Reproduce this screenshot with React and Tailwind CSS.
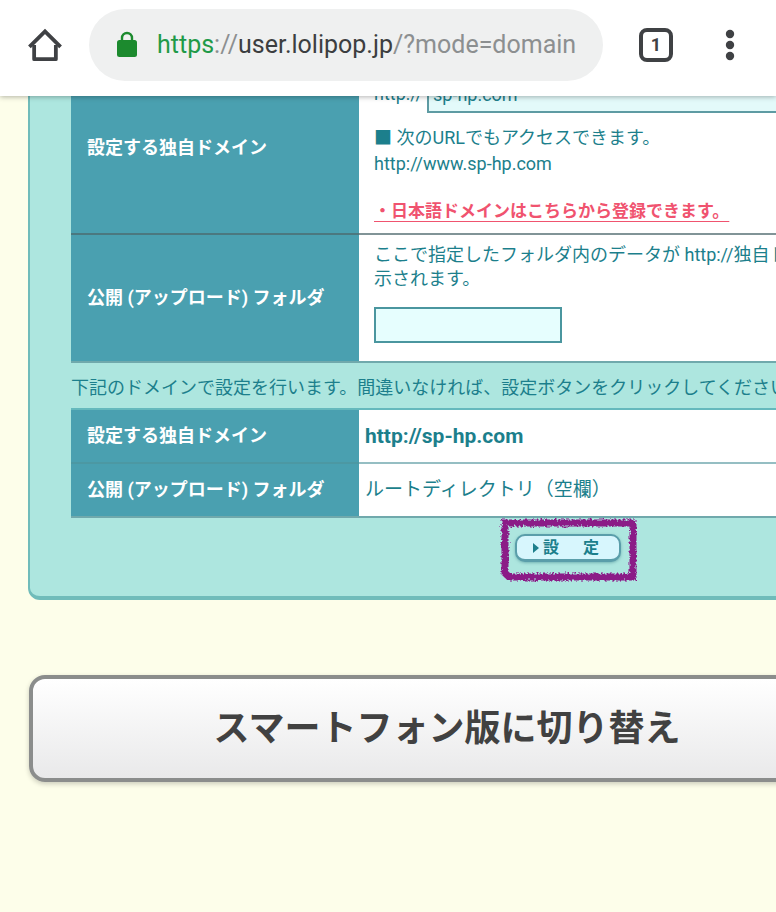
import { useState } from "react";

const labelCell = "w-72 bg-[#4aa0b0] pl-4 text-left align-middle font-bold text-white";

function HomeIcon() {
  return (
    <svg className="h-[34px] w-[34px]" viewBox="0 0 36 36" fill="none" stroke="#3f4144" strokeWidth="4" strokeLinejoin="round">
      <path d="M6.5 18v15h23V18" />
      <path d="M1.5 20 18 3.5 34.5 20" strokeLinejoin="miter" />
    </svg>
  );
}

function LockIcon() {
  return (
    <svg className="h-7 w-5 shrink-0" viewBox="0 0 20 28">
      <path d="M5 11V7a5 5 0 0 1 10 0v4" fill="none" stroke="#1c8a2e" strokeWidth="2.4" />
      <rect x="0" y="9" width="20" height="17" rx="2.5" fill="#1c8a2e" />
    </svg>
  );
}

function BrowserBar() {
  return (
    <header className="relative z-10 flex h-24 items-center bg-white pb-1.5 pl-7 pr-9 shadow-[0_1px_5px_rgba(0,0,0,0.3)]">
      <button type="button" aria-label="Home" className="mr-[27px] shrink-0">
        <HomeIcon />
      </button>
      <button type="button" className="flex h-[72px] min-w-0 flex-1 items-center gap-5 overflow-hidden rounded-full bg-[#eff0f0] pl-7 text-left text-[25px]">
        <LockIcon />
        <span className="whitespace-nowrap text-[#8c8f90]">
          <span className="text-[#1f9a48]">https</span>://<span className="text-[#3c3e40]">user.lolipop.jp</span>/?mode=domain
        </span>
      </button>
      <button type="button" aria-label="Tabs" className="ml-9 flex h-[34px] w-[34px] shrink-0 items-center justify-center rounded-lg border-4 border-[#3f4144] text-lg font-bold text-[#3f4144]">
        1
      </button>
      <button type="button" aria-label="Menu" className="ml-[47px] shrink-0">
        <svg className="h-9 w-5" viewBox="0 0 20 36" fill="#3f4144">
          <circle cx="10" cy="7" r="4.2" />
          <circle cx="10" cy="18" r="4.2" />
          <circle cx="10" cy="29" r="4.2" />
        </svg>
      </button>
    </header>
  );
}

// rough crayon frame around the submit button
function MarkerFrame() {
  return (
    <svg className="pointer-events-none absolute -left-4 -top-4 h-[64px] w-[138px]" viewBox="0 0 138 64" fill="none">
      <filter id="rough" x="-5%" y="-10%" width="110%" height="120%">
        <feTurbulence type="fractalNoise" baseFrequency="0.45" numOctaves="2" seed="4" />
        <feDisplacementMap in="SourceGraphic" scale="6" />
      </filter>
      <path d="M6 5H134V59H10L6 55Z" stroke="#8b1a87" strokeWidth="7" filter="url(#rough)" />
    </svg>
  );
}

export default function App() {
  const [domain, setDomain] = useState("sp-hp.com");
  const [folder, setFolder] = useState("");

  return (
    <div className="flex min-h-screen flex-col overflow-hidden bg-[#fdfeea] font-[Roboto,'Noto_Sans_CJK_JP',sans-serif]">
      <BrowserBar />

      <main className="overflow-hidden pb-32 text-lg text-[#1c7f8c]">
        <form
          onSubmit={(e) => e.preventDefault()}
          className="-mr-[332px] -mt-[35px] ml-7 rounded-b-xl border-2 border-b-4 border-[#70bcba] bg-[#ade6df] pb-[34px] pl-[41px] pr-[41px]"
        >
          <table className="w-full table-fixed border-collapse bg-white leading-6">
            <tbody>
              <tr className="border-b-2 border-[#4c666b]/70">
                <th className={labelCell}>
                  <label htmlFor="domain">設定する独自ドメイン</label>
                </th>
                <td className="pb-2.5 pl-[15px] pt-4">
                  <div className="flex items-center gap-1">
                    <span className="pb-1">http://</span>
                    <input
                      id="domain"
                      value={domain}
                      onChange={(e) => setDomain(e.target.value)}
                      className="h-[34px] min-w-0 flex-1 border-2 border-[#5e9ba3] bg-[#e3fafa] px-1 pb-1"
                    />
                  </div>
                  <p className="mt-3 leading-[26px]">
                    ■ 次のURLでもアクセスできます。
                    <br />
                    http://www.sp-hp.com
                  </p>
                  <p className="mt-[22px]">
                    <a href="#japanese" className="text-[17px] font-bold text-[#f0536f] underline decoration-1 underline-offset-4">
                      ・日本語ドメインはこちらから登録できます。
                    </a>
                  </p>
                </td>
              </tr>
              <tr className="border-b-2 border-[#70a9ac]">
                <th className={labelCell}>
                  <label htmlFor="folder">公開 (アップロード) フォルダ</label>
                </th>
                <td className="pb-[18px] pl-[15px] pt-2">
                  <p>
                    ここで指定したフォルダ内のデータが http://独自ド
                    <br />
                    示されます。
                  </p>
                  <input
                    id="folder"
                    value={folder}
                    onChange={(e) => setFolder(e.target.value)}
                    className="mt-4 block h-9 w-[188px] border-2 border-[#4a969f] bg-[#e6fefe] px-1"
                  />
                </td>
              </tr>
            </tbody>
          </table>

          <p className="pb-2 pt-[13px] leading-6">下記のドメインで設定を行います。間違いなければ、設定ボタンをクリックしてください</p>

          <table className="w-full table-fixed border-collapse border-t-2 border-[#65b9bd] bg-white leading-6">
            <tbody>
              <tr className="h-[54px] border-b-2 border-[#4f929b]/60">
                <th className={labelCell}>設定する独自ドメイン</th>
                <td className="pl-1.5 text-[21px] font-bold">http://sp-hp.com</td>
              </tr>
              <tr className="h-[54px] border-b-2 border-[#70a9ac]">
                <th className={labelCell}>公開 (アップロード) フォルダ</th>
                <td className="pl-1.5 text-[19px]">ルートディレクトリ（空欄）</td>
              </tr>
            </tbody>
          </table>

          <div className="mt-4 flex justify-center">
            <div className="relative">
              <button
                type="submit"
                className="flex h-7 w-[106px] items-center justify-center gap-1 rounded-[10px] border-2 border-b-[3px] border-[#5a9eaa] bg-[#d7f6fd] pr-1 text-base font-bold shadow-[0_1px_3px_rgba(60,130,140,0.5)]"
              >
                <svg className="h-2.5 w-1.5" viewBox="0 0 6 10" fill="#1c7f8c">
                  <path d="M0 0 6 5 0 10Z" />
                </svg>
                <span>設</span>
                <span className="ml-5">定</span>
              </button>
              <MarkerFrame />
            </div>
          </div>
        </form>

        <div className="-mr-[89px] ml-[29px] mt-[75px] flex">
          <button
            type="button"
            className="h-[107px] flex-1 rounded-2xl border-4 border-[#8b8d8c] bg-linear-to-b from-white to-[#e9e9ea] text-4xl font-bold text-[#414141] shadow-[0_2px_5px_rgba(0,0,0,0.2)]"
          >
            スマートフォン版に切り替え
          </button>
        </div>
      </main>
    </div>
  );
}
